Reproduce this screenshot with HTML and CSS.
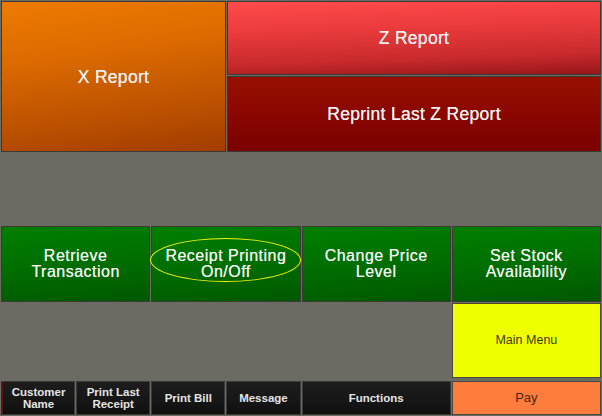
FILE: index.html
```html
<!DOCTYPE html>
<html>
<head>
<meta charset="utf-8">
<link rel="stylesheet" href="styles.css">
</head>
<body>
<div class="screen">
  <div class="top">
    <div class="btn xrep">X Report</div>
    <div class="zcol">
      <div class="btn zrep">Z Report</div>
      <div class="btn reprint">Reprint Last Z Report</div>
    </div>
  </div>
  <div class="spacer"></div>
  <div class="grid4">
    <div class="btn green">Retrieve<br>Transaction</div>
    <div class="btn green hl">Receipt Printing<br>On/Off<span class="ring"></span></div>
    <div class="btn green">Change Price<br>Level</div>
    <div class="btn green">Set Stock<br>Availability</div>
    <div class="btn main">Main Menu</div>
  </div>
  <div class="bottom">
    <div class="btn dark first">Customer<br>Name</div>
    <div class="btn dark">Print Last<br>Receipt</div>
    <div class="btn dark">Print Bill</div>
    <div class="btn dark">Message</div>
    <div class="btn dark wide">Functions</div>
    <div class="btn pay wide">Pay</div>
  </div>
</div>
</body>
</html>
```

FILE: styles.css
```css
html, body {
  margin: 0;
  padding: 0;
  background: #6b6b63;
}
.screen {
  width: 602px;
  height: 416px;
  box-sizing: border-box;
  padding: 1px 1px 1px 1px;
  display: flex;
  flex-direction: column;
  gap: 1px;
  font-family: "Liberation Sans", Arial, sans-serif;
}
.btn {
  box-sizing: border-box;
  border: 1px solid #3b3b36;
  display: flex;
  align-items: center;
  justify-content: center;
  text-align: center;
  color: #f0f0f0;
  font-weight: normal;
  font-size: 17.5px;
  line-height: 18px;
  letter-spacing: 0.3px;
  text-shadow: 0 0 0.6px #f0f0f0;
}
.top {
  display: flex;
  gap: 1px;
  height: 151px;
}
.xrep {
  width: 225px;
  height: 151px;
  background: linear-gradient(172deg, #ee7b00 0%, #dc6a00 35%, #bd5300 70%, #a33c00 100%);
}
.zcol {
  flex: 1;
  display: flex;
  flex-direction: column;
  gap: 1px;
}
.zrep {
  height: 74px;
  background: linear-gradient(178deg, #ff4b4c 0%, #ec3c3d 35%, #c82a2c 75%, #96161a 100%);
}
.reprint {
  flex: 1;
  background: linear-gradient(180deg, #980f00 0%, #8a0700 50%, #7a0000 100%);
}
.spacer {
  height: 74px;
}
.grid4 {
  display: grid;
  grid-template-columns: repeat(4, 1fr);
  grid-template-rows: 76px 75px;
  gap: 1px;
}
.green {
  position: relative;
  font-size: 16px;
  line-height: 16px;
  letter-spacing: 0.5px;
  background: linear-gradient(175deg, #007f00 0%, #007000 45%, #005800 100%);
}
.ring {
  position: absolute;
  left: -2px;
  top: 11px;
  width: 151px;
  height: 44px;
  box-sizing: border-box;
  border: 1px solid #f4f400;
  border-radius: 50%;
}
.main {
  grid-column: 4;
  grid-row: 2;
  background: #f0ff00;
  border-color: #4a4a30;
  color: #3a3a08;
  text-shadow: none;
  letter-spacing: 0;
  font-size: 12.5px;
}
.bottom {
  margin-top: 2px;
  display: grid;
  grid-template-columns: repeat(8, 1fr);
  gap: 1px;
  height: 35px;
}
.dark {
  background: linear-gradient(180deg, #1d1d1d 0%, #161616 60%, #0f0f0f 100%);
  border-color: #3a3a38;
  color: #e4e4e4;
  font-weight: bold;
  text-shadow: none;
  letter-spacing: 0;
  font-size: 11.5px;
  line-height: 12px;
}
.first {
  border-left: 2px solid #5a1414;
}
.wide {
  grid-column: span 2;
}
.pay {
  background: #ff7d3c;
  border-color: #4a4a40;
  color: #4a2410;
  text-shadow: none;
  letter-spacing: 0;
  font-size: 13px;
}
```
